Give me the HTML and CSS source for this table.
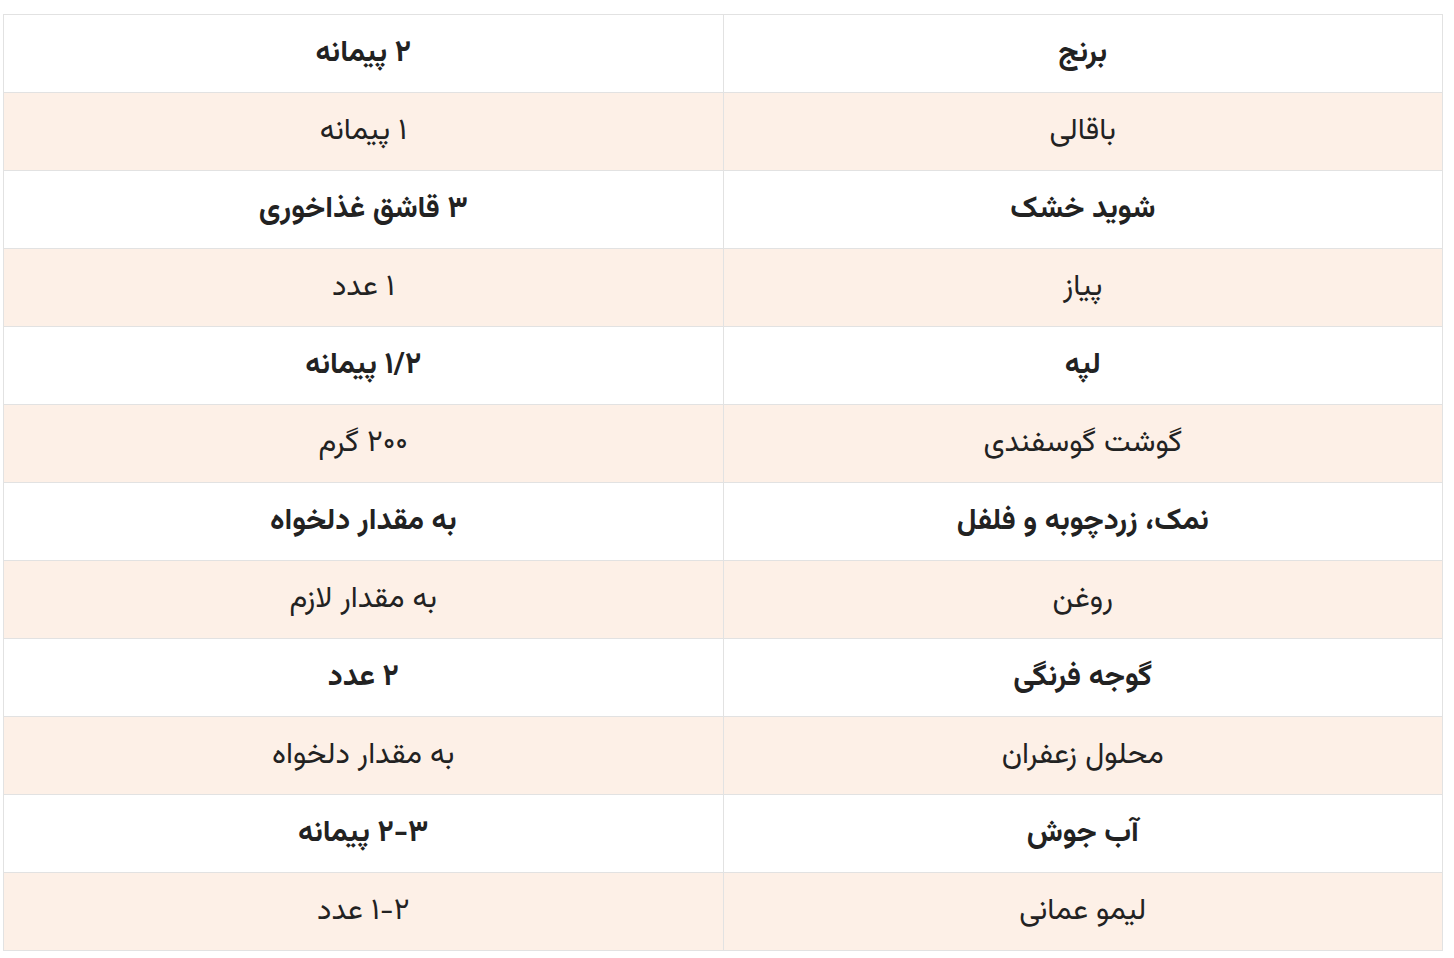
FILE: index.html
```html
<!DOCTYPE html>
<html lang="fa" dir="rtl">
<head>
<meta charset="utf-8">
<link rel="stylesheet" href="styles.css">
</head>
<body>
<div class="wrap">
<table class="recipe">
<tbody>
<tr class="odd"><td>برنج</td><td>۲ پیمانه</td></tr>
<tr class="even"><td>باقالی</td><td>۱ پیمانه</td></tr>
<tr class="odd"><td>شوید خشک</td><td>۳ قاشق غذاخوری</td></tr>
<tr class="even"><td>پیاز</td><td>۱ عدد</td></tr>
<tr class="odd"><td>لپه</td><td>۱/۲ پیمانه</td></tr>
<tr class="even"><td>گوشت گوسفندی</td><td>۲۰۰ گرم</td></tr>
<tr class="odd"><td>نمک، زردچوبه و فلفل</td><td>به مقدار دلخواه</td></tr>
<tr class="even"><td>روغن</td><td>به مقدار لازم</td></tr>
<tr class="odd"><td>گوجه فرنگی</td><td>۲ عدد</td></tr>
<tr class="even"><td>محلول زعفران</td><td>به مقدار دلخواه</td></tr>
<tr class="odd"><td>آب جوش</td><td>۲-۳ پیمانه</td></tr>
<tr class="even"><td>لیمو عمانی</td><td>۱-۲ عدد</td></tr>
</tbody>
</table>
</div>
</body>
</html>
```
FILE: styles.css
```css
html, body {
  margin: 0;
  padding: 0;
  background: #fff;
}
.wrap {
  padding: 14px 11px 0 3px;
}
.recipe {
  width: 1440px;
  border-collapse: collapse;
  table-layout: fixed;
  font-family: "Vazirmatn", "Noto Sans Arabic", "DejaVu Sans", sans-serif;
  font-size: 30px;
  color: #222;
}
.recipe td {
  height: 77px;
  padding: 0;
  text-align: center;
  vertical-align: middle;
  border: 1px solid #e2e2e2;
}
.recipe .odd td {
  background: #fff;
  font-weight: bold;
}
.recipe .even td {
  background: #fdf0e7;
  font-weight: normal;
}
```
